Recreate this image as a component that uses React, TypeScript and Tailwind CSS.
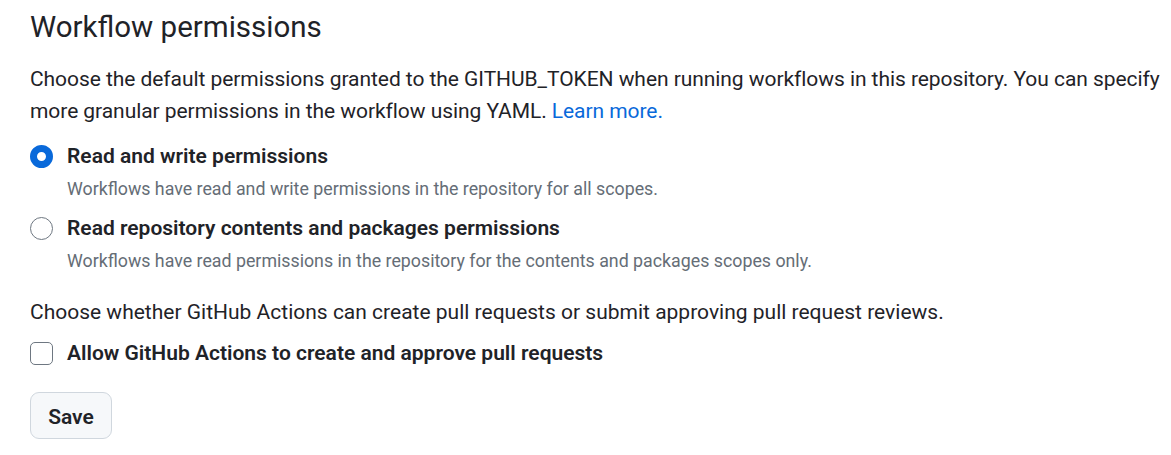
import { useState } from "react";

export default function App() {
  const [perm, setPerm] = useState<"write" | "read">("write");
  const [allowPr, setAllowPr] = useState(false);

  const options = [
    {
      key: "write" as const,
      label: "Read and write permissions",
      note: "Workflows have read and write permissions in the repository for all scopes.",
    },
    {
      key: "read" as const,
      label: "Read repository contents and packages permissions",
      note: "Workflows have read permissions in the repository for the contents and packages scopes only.",
    },
  ];

  return (
    <div className="bg-white pl-[30px] pt-[5px] font-['Roboto',sans-serif] text-[#1f2328]">
      <h2 className="text-[29.5px] font-normal leading-[45px]">Workflow permissions</h2>

      <p className="mt-[14px] text-[21px] leading-[31.5px] tracking-[-0.06px]">
        <span className="whitespace-nowrap">
          Choose the default permissions granted to the GITHUB_TOKEN when running workflows in this repository. You can specify
        </span>
        <br />
        more granular permissions in the workflow using YAML.{" "}
        <a href="#" className="text-[#0969da]">Learn more.</a>
      </p>

      {/* Token permission radios */}
      <div className="mt-[14px] flex flex-col gap-[11px]">
        {options.map((o) => {
          const checked = perm === o.key;
          return (
            <label key={o.key} className="flex cursor-pointer flex-col" onClick={() => setPerm(o.key)}>
              <div className="flex items-center gap-[14px]">
                <span
                  className={`h-[23px] w-[23px] shrink-0 rounded-full ${
                    checked ? "border-[7px] border-[#0969da] bg-white" : "border border-[#6e7781] bg-white"
                  }`}
                />
                <span className="text-[21px] font-semibold leading-[31px]">{o.label}</span>
              </div>
              <span className="mt-[4px] pl-[37px] text-[17.8px] leading-[26px] text-[#656d76]">{o.note}</span>
            </label>
          );
        })}
      </div>

      <p className="mt-[23px] text-[21px] leading-[31px]">
        Choose whether GitHub Actions can create pull requests or submit approving pull request reviews.
      </p>

      <label className="mt-[10px] flex cursor-pointer items-center gap-[14px]" onClick={() => setAllowPr(!allowPr)}>
        <span
          className={`flex h-[23px] w-[23px] shrink-0 items-center justify-center rounded-[5px] border ${
            allowPr ? "border-[#0969da] bg-[#0969da]" : "border-[#6e7781] bg-white"
          }`}
        >
          {allowPr && (
            <svg viewBox="0 0 16 16" className="h-[16px] w-[16px] fill-white">
              <path d="M13.78 4.22a.75.75 0 0 1 0 1.06l-7.25 7.25a.75.75 0 0 1-1.06 0L2.22 9.28a.75.75 0 0 1 1.06-1.06L6 10.94l6.72-6.72a.75.75 0 0 1 1.06 0Z" />
            </svg>
          )}
        </span>
        <span className="text-[21px] font-semibold leading-[31px]">Allow GitHub Actions to create and approve pull requests</span>
      </label>

      <button className="mt-[23px] h-[47px] w-[82px] rounded-[9px] border border-[#d0d7de] bg-[#f6f8fa] pt-[4px] text-[21px] font-semibold text-[#1f2328]">
        Save
      </button>
    </div>
  );
}
